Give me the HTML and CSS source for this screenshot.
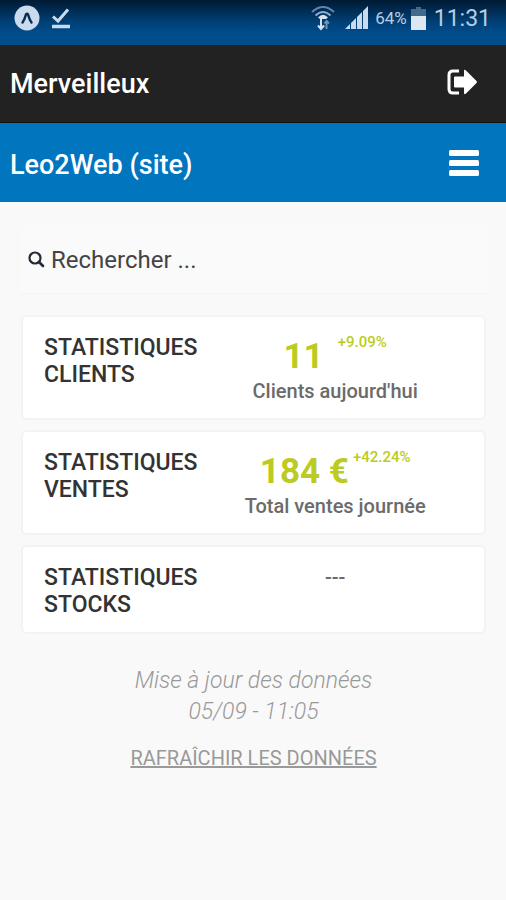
FILE: index.html
```html
<!DOCTYPE html>
<html lang="fr">
<head>
    <meta charset="UTF-8">
    <meta name="viewport" content="width=device-width, initial-scale=1.0">
    <title>Leo2Web</title>
    <link rel="stylesheet" href="styles.css">
</head>
<body>
    <div class="status-bar">
        <div class="status-group">
            <svg width="26" height="26" viewBox="0 0 26 26" aria-hidden="true">
                <circle cx="13" cy="13" r="12.5" fill="#c9dbec"/>
                <path d="M8.500 17.500C10.500 15 11.500 11 12 9.300Q13 8.300 14 9.300C14.500 11 15.500 15 17.500 17.500" fill="none" stroke="#0a2c57" stroke-width="2.400" stroke-linecap="round"/>
            </svg>
            <svg width="20" height="22" viewBox="0 0 20 22" aria-hidden="true">
                <path d="M2 9.500L7 14L17 2.500" fill="none" stroke="#c9dbec" stroke-width="3"/>
                <path d="M1 19.500H19" stroke="#c9dbec" stroke-width="3.500"/>
            </svg>
        </div>
        <div class="status-group status-right">
            <svg width="24" height="26" viewBox="0 0 24 26" fill="none" aria-hidden="true">
                <path d="M1 7Q12-3 23 7" stroke="#5f86ad" stroke-width="2"/>
                <path d="M4.500 10.500Q12 3.500 19.500 10.500" stroke="#8fabc9" stroke-width="2"/>
                <path d="M7 12.500Q12 7 17 12.500L15 14H9Z" fill="#d6e3f0"/>
                <path d="M10 14V23M7 20.500L10 24L13 20.500" stroke="#d6e3f0" stroke-width="2"/>
                <path d="M15.500 24V16M13.500 18.500L15.500 16L18 18.500" stroke="#6f93b8" stroke-width="2"/>
            </svg>
            <svg class="signal" width="24" height="24" viewBox="0 0 24 24" fill="#c9dbec" aria-hidden="true">
                <path d="M0 23L5 18V23ZM6 17L11 12V23H6ZM12 11L17 6V23H12ZM18 5L23 0V23H18Z"/>
            </svg>
            <span class="battery-level">64%</span>
            <svg width="15" height="23" viewBox="0 0 15 23" aria-hidden="true">
                <path d="M5 0H10V2H15V9H0V2H5Z" fill="#416a8d"/>
                <path d="M0 9H15V23H0Z" fill="#dce7f1"/>
            </svg>
            <span class="clock">11:31</span>
        </div>
    </div>

    <header class="bar bar-user">
        <h1>Merveilleux</h1>
        <button type="button" aria-label="Se déconnecter">
            <svg width="32" height="26" viewBox="0 0 32 26" aria-hidden="true">
                <path d="M12 2H6Q2 2 2 6V20Q2 24 6 24H12" fill="none" stroke="#fff" stroke-width="3"/>
                <path d="M7 8.500Q7 7.500 8 7.500H17V2Q17 0 19 1.500L29.500 12Q30.500 13 29.500 14L19 24.500Q17 26 17 24V18.500H8Q7 18.500 7 17.500Z" fill="#fff"/>
            </svg>
        </button>
    </header>

    <nav class="bar bar-site">
        <h2>Leo2Web (site)</h2>
        <button type="button" aria-label="Menu">
            <svg width="30" height="26" viewBox="0 0 30 26" fill="#fff" aria-hidden="true">
                <rect width="30" height="6" rx="1.500"/>
                <rect y="10" width="30" height="6" rx="1.500"/>
                <rect y="20" width="30" height="6" rx="1.500"/>
            </svg>
        </button>
    </nav>

    <main>
        <div class="search">
            <label for="search">
                <svg width="17" height="17" viewBox="0 0 17 17" fill="none" stroke="#222b35" aria-hidden="true">
                    <circle cx="7" cy="7" r="5.500" stroke-width="2.200"/>
                    <path d="M11 11L15 15" stroke-width="2.600" stroke-linecap="round"/>
                </svg>
            </label>
            <input type="text" id="search" placeholder="Rechercher ..." aria-label="Rechercher">
        </div>

        <section class="card">
            <h3>STATISTIQUES CLIENTS</h3>
            <div class="stat">
                <div class="figure figure-wide">
                    <span class="value">11</span>
                    <span class="trend">+9.09%</span>
                </div>
                <p>Clients aujourd'hui</p>
            </div>
        </section>

        <section class="card">
            <h3>STATISTIQUES VENTES</h3>
            <div class="stat">
                <div class="figure">
                    <span class="value">184 €</span>
                    <span class="trend">+42.24%</span>
                </div>
                <p>Total ventes journée</p>
            </div>
        </section>

        <section class="card">
            <h3>STATISTIQUES STOCKS</h3>
            <div class="stat">
                <p>---</p>
            </div>
        </section>

        <p class="updated">Mise à jour des données<br>05/09 - 11:05</p>
        <a class="refresh" href="#">RAFRAÎCHIR LES DONNÉES</a>
    </main>
</body>
</html>
```

FILE: styles.css
```css
* {
    margin: 0;
    padding: 0;
    box-sizing: border-box;
}

body {
    font-family: Roboto, "Liberation Sans", sans-serif;
    background-color: #f9f9f9;
    color: #333;
}

svg {
    display: block;
    flex-shrink: 0;
}

.status-bar {
    display: flex;
    justify-content: space-between;
    height: 45px;
    padding: 4px 15px 6px 14px;
    background: linear-gradient(#001a33, #004178 50%, #004d8c 75%, #004d8c);
    color: #b9cde0;
}

.status-group {
    display: flex;
    align-items: center;
    gap: 11px;
    height: 28px;
}

.status-right {
    gap: 4px;
}

.signal {
    margin: 0 2px 0 6px;
}

.battery-level {
    font-size: 17px;
}

.clock {
    margin-left: 4px;
    font-size: 23px;
}

.bar {
    display: flex;
    justify-content: space-between;
    align-items: center;
    height: 79px;
    padding: 0 27px 0 10px;
    color: #fff;
}

.bar-user {
    height: 78px;
    padding-bottom: 4px;
    background-color: #222;
    border-bottom: 1px solid #111;
}

.bar-site {
    background-color: #0275bf;
}

.bar h1, .bar h2 {
    padding-top: 4px;
    font-size: 27px;
    font-weight: 500;
}

.bar button {
    background: none;
    border: none;
    cursor: pointer;
}

main {
    display: flex;
    flex-direction: column;
    padding: 24px 20px 24px 21px;
}

.search {
    display: flex;
    align-items: center;
    gap: 6px;
    height: 68px;
    margin-bottom: 21px;
    padding-left: 7px;
    background-color: #fafafa;
    border-bottom: 1px solid #f3f3f3;
}

.search input {
    flex: 1;
    min-width: 0;
    background: none;
    border: none;
    outline: none;
    color: #444;
    font-family: inherit;
    font-size: 24px;
}

.search input::placeholder {
    color: #444;
}

.card {
    display: grid;
    grid-template-columns: 2fr 3fr;
    margin-bottom: 10px;
    padding: 17px 24px 14px 21px;
    background-color: #fff;
    border: 2px solid #f3f3f3;
    border-radius: 6px;
}

.card h3 {
    font-size: 23px;
    font-weight: 500;
    line-height: 27px;
}

.stat {
    text-align: center;
}

.figure {
    display: flex;
    justify-content: center;
    gap: 4px;
    height: 44px;
}

.figure-wide {
    gap: 14px;
}

.value, .trend {
    color: #bccb21;
}

.value {
    font-size: 35px;
    font-weight: 700;
    line-height: 46px;
}

.trend {
    font-size: 15px;
    font-weight: 500;
    line-height: 17px;
}

.stat p {
    color: #6b6b6b;
    font-size: 20px;
    font-weight: 500;
    line-height: 26px;
}

.updated {
    margin-top: 21px;
    color: #999;
    font-size: 23px;
    font-style: italic;
    font-weight: 300;
    line-height: 31px;
    text-align: center;
}

.refresh {
    align-self: center;
    margin-top: 19px;
    color: #999;
    font-size: 20px;
    line-height: 24px;
}
```
